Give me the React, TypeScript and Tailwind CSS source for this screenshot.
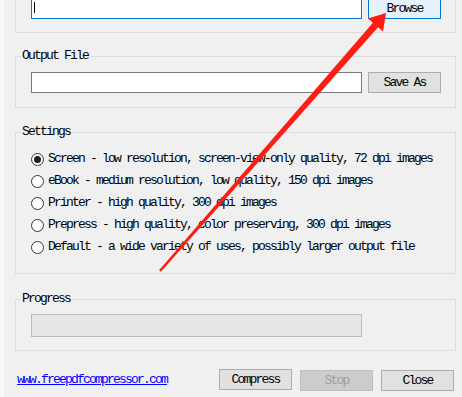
import type { ReactNode } from "react";

const mono = "font-['Liberation_Mono',monospace] text-[13px] tracking-[-1.8px] text-black";

interface GroupProps {
  title?: string;
  className?: string;
  children: ReactNode;
}

function Group({ title, className = "", children }: GroupProps) {
  return (
    <div className={`relative w-[441px] border border-[#dcdcdc] pl-[15px] ${className}`}>
      {title && (
        <span className={`absolute left-[5px] top-[-7px] bg-[#f0f0f0] pl-[1px] pr-[3px] leading-[12px] ${mono}`}>
          {title}
        </span>
      )}
      {children}
    </div>
  );
}

function Radio({ checked = false, label }: { checked?: boolean; label: string }) {
  return (
    <div className="flex h-[22px] items-center">
      <span className="flex h-[13px] w-[13px] items-center justify-center rounded-full border border-[#333333] bg-white">
        {checked && <span className="h-[7px] w-[7px] rounded-full bg-[#1f1f1f]" />}
      </span>
      <span className={`ml-[4px] whitespace-pre leading-[14px] ${mono}`}>{label}</span>
    </div>
  );
}

function Btn({
  children,
  variant = "normal",
  className = "",
}: {
  children: ReactNode;
  variant?: "normal" | "hover" | "disabled";
  className?: string;
}) {
  const look =
    variant === "hover"
      ? "border-[#0078d7] bg-[#e5f1fb]"
      : variant === "disabled"
        ? "border-[#bfbfbf] bg-[#cccccc] !text-[#a0a0a0]"
        : "border-[#adadad] bg-[#e1e1e1]";
  return (
    <button
      type="button"
      className={`flex h-[21px] w-[73px] items-center justify-center border leading-[12px] ${mono} ${look} ${className}`}
    >
      {children}
    </button>
  );
}

export default function App() {
  const options = [
    "Screen - low resolution, screen-view-only quality, 72 dpi images",
    "eBook - medium resolution, low quality, 150 dpi images",
    "Printer - high quality, 300 dpi images",
    "Prepress - high quality, color preserving, 300 dpi images",
    "Default - a wide variety of uses, possibly larger output file",
  ];

  return (
    <div className="relative flex h-[397px] w-[462px] overflow-hidden bg-[#f0f0f0]">
      <div className="w-[4px] shrink-0 bg-[#f8f8f8]" />
      <div className="flex flex-col pl-[11px]">
        {/* Input file (scrolled partly out of view) */}
        <Group className="mt-[-22px] pt-[19px] pb-[13px]">
          <div className="flex gap-[6px]">
            <div className="relative h-[21px] w-[331px] border border-[#0078d7] bg-white">
              <span className="absolute left-[2px] top-[3px] h-[11px] w-px bg-black" />
            </div>
            <Btn variant="hover">Browse</Btn>
          </div>
        </Group>

        <Group title="Output File" className="mt-[23px] pt-[15px] pb-[14px]">
          <div className="flex gap-[6px]">
            <div className="h-[21px] w-[331px] border border-[#7a7a7a] bg-white" />
            <Btn>Save As</Btn>
          </div>
        </Group>

        <Group title="Settings" className="mt-[24px] pt-[15px] pb-[15px]">
          {options.map((o, i) => (
            <Radio key={o} label={o} checked={i === 0} />
          ))}
        </Group>

        <Group title="Progress" className="mt-[25px] pt-[14px] pb-[13px]">
          <div className="h-[23px] w-[331px] border border-[#bcbcbc] bg-[#e6e6e6]" />
        </Group>

        <div className="mt-[18px] flex w-[441px] items-start">
          <a
            href="#"
            className={`ml-[2px] mt-[5px] leading-[12px] underline !text-[#0000ff] ${mono}`}
          >
            www.freepdfcompressor.com
          </a>
          <Btn className="ml-auto">Compress</Btn>
          <Btn variant="disabled" className="ml-[8px] mt-px">
            Stop
          </Btn>
          <Btn className="ml-[8px] mr-[2px] mt-px">Close</Btn>
        </div>
      </div>

      {/* red annotation arrow */}
      <svg className="pointer-events-none absolute inset-0" width="462" height="397" viewBox="0 0 462 397">
        <polygon
          points="159.1,270.2 372.9,22.7 368,18.4 386,13 383,31.6 378.1,27.3 160.9,271.8"
          fill="#fe1d12"
        />
      </svg>
    </div>
  );
}
